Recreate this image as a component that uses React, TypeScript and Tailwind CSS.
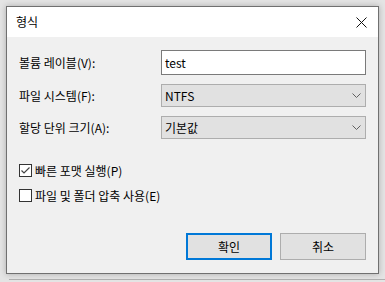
import React from 'react';

const font = { fontFamily: '"Noto Sans CJK KR", "Liberation Sans", sans-serif' };

const Chevron = () => (
  <svg width="9" height="5" viewBox="0 0 9 5" className="shrink-0">
    <polyline points="0.5,0.5 4.5,4.5 8.5,0.5" fill="none" stroke="#606060" strokeWidth="1" />
  </svg>
);

const Field = ({ label, children }: { label: string; children: React.ReactNode }) => (
  <div className="flex items-center">
    <span className="w-[142px] text-[12px] text-black leading-none">{label}</span>
    {children}
  </div>
);

const Select = ({ value }: { value: string }) => (
  <div className="w-[205px] h-[23px] bg-[#e1e1e1] border border-[#adadad] flex items-center justify-between pl-[3px] pr-[4px]">
    <span className="text-[12px] text-black leading-none">{value}</span>
    <Chevron />
  </div>
);

const Check = ({ checked, label }: { checked?: boolean; label: string }) => (
  <div className="flex items-center gap-[3px] h-[13px]">
    <div className="w-[13px] h-[13px] bg-white border border-[#333333] flex items-center justify-center">
      {checked && (
        <svg width="11" height="11" viewBox="0 0 11 11">
          <polyline points="1.5,5.5 4,8 9.5,2.5" fill="none" stroke="#444" strokeWidth="1.2" />
        </svg>
      )}
    </div>
    <span className="text-[12px] text-black leading-none">{label}</span>
  </div>
);

export default function App() {
  return (
    <div className="relative w-[385px] h-[282px] bg-[#e4e4e4] overflow-hidden" style={font}>
      <div className="absolute left-[9px] top-[279px] right-0 h-px bg-[#b0b0b0]" />
      <div className="relative ml-[6px] mt-[6px] w-[373px] h-[268px] border border-[#707070] bg-[#f0f0f0] shadow-[0_0_6px_rgba(0,0,0,0.25)] flex flex-col">
        <div className="h-[30px] bg-white flex items-center justify-between pl-[9px] pr-[11px]">
          <span className="text-[12px] text-black leading-none">형식</span>
          <svg width="11" height="11" viewBox="0 0 11 11">
            <path d="M0.5 0.5 L10.5 10.5 M10.5 0.5 L0.5 10.5" stroke="#111" strokeWidth="1" />
          </svg>
        </div>
        <div className="flex-1 flex flex-col pl-[12px] pr-[12px] pt-[13px]">
          <Field label="볼륨 레이블(V):">
            <div className="w-[205px] h-[25px] bg-white border border-[#7a7a7a] flex items-center pl-[3px]">
              <span className="text-[12px] text-black leading-none">test</span>
            </div>
          </Field>
          <div className="mt-[9px]">
            <Field label="파일 시스템(F):">
              <Select value="NTFS" />
            </Field>
          </div>
          <div className="mt-[9px]">
            <Field label="할당 단위 크기(A):">
              <Select value="기본값" />
            </Field>
          </div>
          <div className="mt-[25px] flex flex-col gap-[12px]">
            <Check checked label="빠른 포맷 실행(P)" />
            <Check label="파일 및 폴더 압축 사용(E)" />
          </div>
          <div className="mt-auto mb-[13px] flex justify-end gap-[8px]">
            <button className="w-[86px] h-[27px] bg-[#e1e1e1] border-2 border-[#0078d7] text-[12px] text-black leading-none">
              확인
            </button>
            <button className="w-[86px] h-[27px] bg-[#e1e1e1] border border-[#adadad] text-[12px] text-black leading-none">
              취소
            </button>
          </div>
        </div>
      </div>
    </div>
  );
}
